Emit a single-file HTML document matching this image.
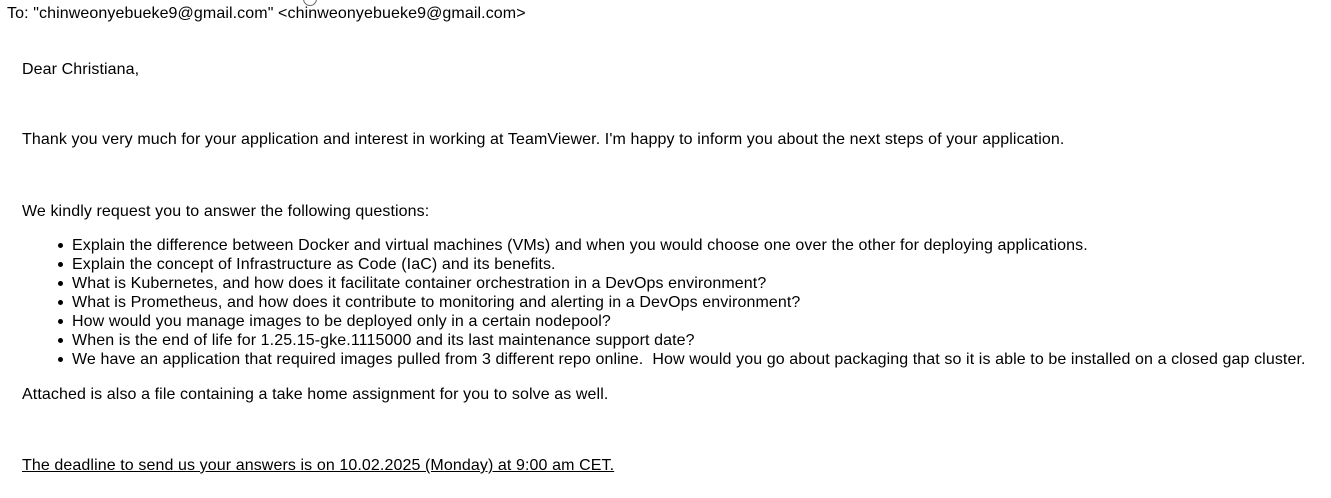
<!DOCTYPE html>
<html><head><meta charset="utf-8"><style>
body{margin:0;width:1331px;height:498px;background:#fff;font-family:"Liberation Sans",Arial,sans-serif;font-size:16px;color:#000;position:relative;overflow:hidden;letter-spacing:0.1px}
.l{position:absolute;white-space:pre;line-height:19px}
.b{position:absolute;left:58px;width:5px;height:5px;border-radius:50%;background:#000}
</style></head><body>
<div style="position:absolute;left:303px;top:-8px;width:12px;height:12px;border:1px solid #666;border-radius:50%"></div>
<div class="l" style="left:7px;top:4px">To: "chinweonyebueke9@gmail.com" &lt;chinweonyebueke9@gmail.com&gt;</div>
<div class="l" style="left:22px;top:60px">Dear Christiana,</div>
<div class="l" style="left:22px;top:130px">Thank you very much for your application and interest in working at TeamViewer. I'm happy to inform you about the next steps of your application.</div>
<div class="l" style="left:22px;top:202px">We kindly request you to answer the following questions:</div>
<div class="b" style="top:243px"></div><div class="l" style="left:72px;top:236px">Explain the difference between Docker and virtual machines (VMs) and when you would choose one over the other for deploying applications.</div>
<div class="b" style="top:262px"></div><div class="l" style="left:72px;top:255px">Explain the concept of Infrastructure as Code (IaC) and its benefits.</div>
<div class="b" style="top:281px"></div><div class="l" style="left:72px;top:274px">What is Kubernetes, and how does it facilitate container orchestration in a DevOps environment?</div>
<div class="b" style="top:300px"></div><div class="l" style="left:72px;top:293px">What is Prometheus, and how does it contribute to monitoring and alerting in a DevOps environment?</div>
<div class="b" style="top:319px"></div><div class="l" style="left:72px;top:312px">How would you manage images to be deployed only in a certain nodepool?</div>
<div class="b" style="top:338px"></div><div class="l" style="left:72px;top:331px">When is the end of life for 1.25.15-gke.1115000 and its last maintenance support date?</div>
<div class="b" style="top:357px"></div><div class="l" style="left:72px;top:350px">We have an application that required images pulled from 3 different repo online.  How would you go about packaging that so it is able to be installed on a closed gap cluster.</div>
<div class="l" style="left:22px;top:385px">Attached is also a file containing a take home assignment for you to solve as well.</div>
<div class="l" style="left:22px;top:456px;text-decoration:underline">The deadline to send us your answers is on 10.02.2025 (Monday) at 9:00 am CET.</div>
</body></html>
